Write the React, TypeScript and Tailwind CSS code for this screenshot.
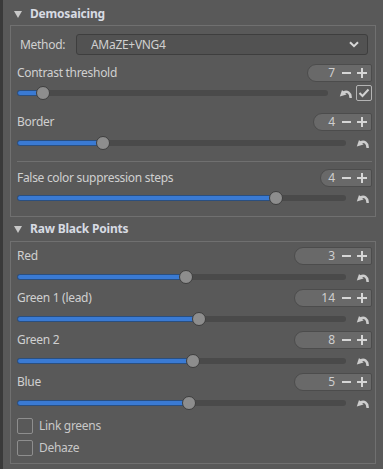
import React from "react";

const font = { fontFamily: "'Noto Sans', 'Open Sans', sans-serif" };

const TRACK_START = 17;

const UndoIcon = () => (
  <svg width="13" height="10" viewBox="0 0 13 10" className="shrink-0">
    <path d="M11.6 9.2 C11.4 4.6 8.2 3 5 4.2" stroke="#cdcdcd" strokeWidth="2.6" fill="none" strokeLinecap="round" />
    <path d="M0.8 8.6 L3 2 L7.6 6.4 Z" fill="#cdcdcd" />
  </svg>
);

const SpinBox = ({ value, width }: { value: string; width: string }) => (
  <div
    className={`${width} h-[18px] flex items-center justify-end rounded-l-[9px] rounded-r-[2px] bg-[#696969] border border-[#4c4c4c] text-[#cfcfcf] text-[12px] leading-none pr-[2px]`}
  >
    <span className="pr-[4px]">{value}</span>
    <span className="w-[15px] flex justify-center">
      <span className="block w-[9px] h-[2px] bg-[#d6d6d6]" />
    </span>
    <span className="w-[15px] flex justify-center relative">
      <span className="block w-[10px] h-[2px] bg-[#d6d6d6]" />
      <span className="absolute block w-[2px] h-[10px] bg-[#d6d6d6] top-[-4px]" />
    </span>
  </div>
);

const LabelRow = ({ label, value, width, mt = "" }: { label: string; value: string; width: string; mt?: string }) => (
  <div className={`h-[18px] flex items-center justify-between ${mt}`}>
    <span className="text-[12px] tracking-[-0.3px] text-[#d0d0d0] leading-none">{label}</span>
    <SpinBox value={value} width={width} />
  </div>
);

const Slider = ({ thumb, end, h, children }: { thumb: number; end: number; h: string; children: React.ReactNode }) => {
  const width = end - TRACK_START;
  const pos = thumb - TRACK_START;
  return (
    <div className={`${h} flex items-center`}>
      <div className="relative h-[6px] rounded-full bg-[#4a4a4a] shrink-0" style={{ width }}>
        <div className="absolute left-0 top-0 h-[6px] rounded-full bg-[#3a7ad3] border border-[#2a4f80]" style={{ width: pos }} />
        <div
          className="absolute top-[-4px] w-[14px] h-[14px] rounded-full bg-[#8d8d8d] border border-[#3e3e3e]"
          style={{ left: pos - 7 }}
        />
      </div>
      <div className="flex-1 flex items-center justify-end gap-[4px]">{children}</div>
    </div>
  );
};

const Check = ({ checked }: { checked?: boolean }) => (
  <div
    className={`w-[16px] h-[16px] rounded-[2px] border flex items-center justify-center ${
      checked ? "border-[#b4b4b4]" : "border-[#8e8e8e]"
    }`}
  >
    {checked && (
      <svg width="12" height="10" viewBox="0 0 12 10">
        <path d="M1.5 5 L4.5 8 L10.5 1.5" stroke="#d2d2d2" strokeWidth="2" fill="none" />
      </svg>
    )}
  </div>
);

const Header = ({ title, h }: { title: string; h: string }) => (
  <div className={`${h} flex items-center pl-[4px] gap-[8px]`}>
    <svg width="8" height="7" viewBox="0 0 8 7">
      <path d="M0 0 L8 0 L4 7 Z" fill="#c8c8c8" />
    </svg>
    <span className="text-[12px] font-bold tracking-[-0.2px] text-[#d7dbe3] leading-none">{title}</span>
  </div>
);

export default function App() {
  return (
    <div className="w-[383px] h-[469px] bg-[#595959] flex overflow-hidden" style={font}>
      <div className="w-[3px] bg-[#3a3a3a]" />
      <div className="w-[373px] pl-[7px]">
        <Header title="Demosaicing" h="h-[25px] pt-[3px]" />
        <div className="border border-[#707070] pl-[6px] pr-[3px] pt-[8px] pb-[7px]">
          <div className="flex items-center h-[21px]">
            <span className="w-[59px] pl-[3px] text-[12px] tracking-[-0.3px] text-[#d0d0d0]">Method:</span>
            <div className="w-[292px] h-[21px] rounded-[3px] bg-[#525252] border border-[#3e3e3e] flex items-center justify-between pl-[14px] pr-[8px]">
              <span className="text-[12px] tracking-[-0.3px] text-[#d0d0d0]">AMaZE+VNG4</span>
              <svg width="10" height="7" viewBox="0 0 10 7">
                <path d="M1 1.2 L5 5.2 L9 1.2" stroke="#d8d8d8" strokeWidth="2" fill="none" />
              </svg>
            </div>
          </div>
          <LabelRow label="Contrast threshold" value="7" width="w-[65px]" mt="mt-[9px]" />
          <Slider thumb={43} end={328} h="h-[22px]">
            <UndoIcon />
            <Check checked />
          </Slider>
          <LabelRow label="Border" value="4" width="w-[59px]" mt="mt-[9px]" />
          <Slider thumb={103} end={346} h="h-[24px]">
            <span className="pr-[3px] flex"><UndoIcon /></span>
          </Slider>
          <div className="h-[1px] bg-[#707070] mt-[6px] mb-[7px]" />
          <LabelRow label="False color suppression steps" value="4" width="w-[52px]" />
          <Slider thumb={276} end={346} h="h-[22px]">
            <span className="pr-[3px] flex"><UndoIcon /></span>
          </Slider>
        </div>
        <Header title="Raw Black Points" h="h-[24px]" />
        <div className="border border-[#707070] pl-[6px] pr-[3px] pt-[5px] pb-[4px]">
          {[
            { label: "Red", value: "3", thumb: 186 },
            { label: "Green 1 (lead)", value: "14", thumb: 199 },
            { label: "Green 2", value: "8", thumb: 193 },
            { label: "Blue", value: "5", thumb: 189 },
          ].map((r) => (
            <div key={r.label}>
              <LabelRow label={r.label} value={r.value} width="w-[78px]" />
              <Slider thumb={r.thumb} end={346} h="h-[24px]">
                <span className="pr-[3px] flex"><UndoIcon /></span>
              </Slider>
            </div>
          ))}
          {["Link greens", "Dehaze"].map((t) => (
            <div key={t} className="h-[22px] flex items-center gap-[6px]">
              <Check />
              <span className="text-[12px] tracking-[-0.3px] text-[#c8c8c8]">{t}</span>
            </div>
          ))}
        </div>
      </div>
    </div>
  );
}
